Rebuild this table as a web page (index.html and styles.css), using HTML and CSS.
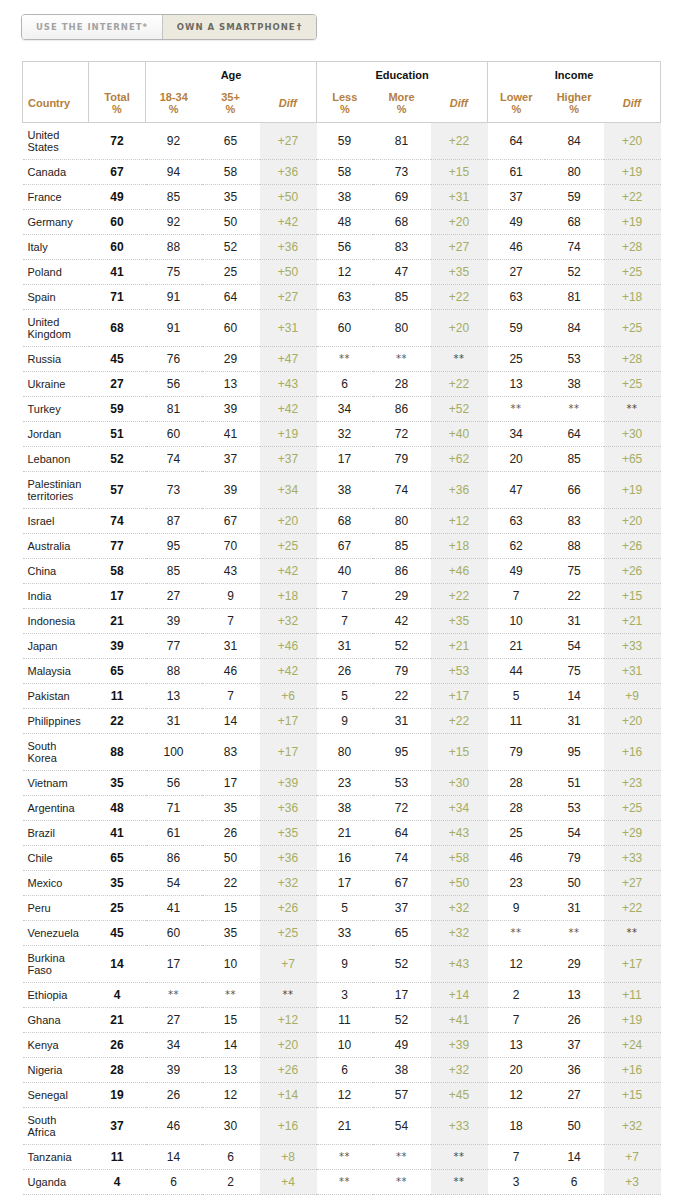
FILE: index.html
```html
<!DOCTYPE html>
<html>
<head>
<meta charset="utf-8">
<link rel="stylesheet" href="styles.css">
</head>
<body>
<div class="page">
  <div class="tabs">
    <div class="tab tab-off">USE THE INTERNET*</div>
    <div class="tab tab-on">OWN A SMARTPHONE<sup>†</sup></div>
  </div>
  <table class="data">
    <colgroup>
      <col class="c-country"><col class="c-total">
      <col class="c1"><col class="c2"><col class="c3">
      <col class="c1"><col class="c2"><col class="c3">
      <col class="c4"><col class="c5"><col class="c3">
    </colgroup>
    <thead>
      <tr class="h1">
        <th class="blank sep"></th>
        <th class="blank sep"></th>
        <th colspan="3" class="grp sep">Age</th>
        <th colspan="3" class="grp sep">Education</th>
        <th colspan="3" class="grp">Income</th>
      </tr>
      <tr class="h2">
        <th class="lbl country sep">Country</th>
        <th class="lbl sep">Total<br>%</th>
        <th class="lbl">18-34<br>%</th>
        <th class="lbl">35+<br>%</th>
        <th class="lbl diffh sep">Diff</th>
        <th class="lbl">Less<br>%</th>
        <th class="lbl">More<br>%</th>
        <th class="lbl diffh sep">Diff</th>
        <th class="lbl">Lower<br>%</th>
        <th class="lbl">Higher<br>%</th>
        <th class="lbl diffh">Diff</th>
      </tr>
    </thead>
    <tbody>
      <tr><td class="cn">United<br>States</td><td class="t">72</td><td>92</td><td>65</td><td class="d">+27</td><td>59</td><td>81</td><td class="d">+22</td><td>64</td><td>84</td><td class="d">+20</td></tr>
      <tr><td class="cn">Canada</td><td class="t">67</td><td>94</td><td>58</td><td class="d">+36</td><td>58</td><td>73</td><td class="d">+15</td><td>61</td><td>80</td><td class="d">+19</td></tr>
      <tr><td class="cn">France</td><td class="t">49</td><td>85</td><td>35</td><td class="d">+50</td><td>38</td><td>69</td><td class="d">+31</td><td>37</td><td>59</td><td class="d">+22</td></tr>
      <tr><td class="cn">Germany</td><td class="t">60</td><td>92</td><td>50</td><td class="d">+42</td><td>48</td><td>68</td><td class="d">+20</td><td>49</td><td>68</td><td class="d">+19</td></tr>
      <tr><td class="cn">Italy</td><td class="t">60</td><td>88</td><td>52</td><td class="d">+36</td><td>56</td><td>83</td><td class="d">+27</td><td>46</td><td>74</td><td class="d">+28</td></tr>
      <tr><td class="cn">Poland</td><td class="t">41</td><td>75</td><td>25</td><td class="d">+50</td><td>12</td><td>47</td><td class="d">+35</td><td>27</td><td>52</td><td class="d">+25</td></tr>
      <tr><td class="cn">Spain</td><td class="t">71</td><td>91</td><td>64</td><td class="d">+27</td><td>63</td><td>85</td><td class="d">+22</td><td>63</td><td>81</td><td class="d">+18</td></tr>
      <tr><td class="cn">United<br>Kingdom</td><td class="t">68</td><td>91</td><td>60</td><td class="d">+31</td><td>60</td><td>80</td><td class="d">+20</td><td>59</td><td>84</td><td class="d">+25</td></tr>
      <tr><td class="cn">Russia</td><td class="t">45</td><td>76</td><td>29</td><td class="d">+47</td><td class="na">**</td><td class="na">**</td><td class="d na">**</td><td>25</td><td>53</td><td class="d">+28</td></tr>
      <tr><td class="cn">Ukraine</td><td class="t">27</td><td>56</td><td>13</td><td class="d">+43</td><td>6</td><td>28</td><td class="d">+22</td><td>13</td><td>38</td><td class="d">+25</td></tr>
      <tr><td class="cn">Turkey</td><td class="t">59</td><td>81</td><td>39</td><td class="d">+42</td><td>34</td><td>86</td><td class="d">+52</td><td class="na">**</td><td class="na">**</td><td class="d na">**</td></tr>
      <tr><td class="cn">Jordan</td><td class="t">51</td><td>60</td><td>41</td><td class="d">+19</td><td>32</td><td>72</td><td class="d">+40</td><td>34</td><td>64</td><td class="d">+30</td></tr>
      <tr><td class="cn">Lebanon</td><td class="t">52</td><td>74</td><td>37</td><td class="d">+37</td><td>17</td><td>79</td><td class="d">+62</td><td>20</td><td>85</td><td class="d">+65</td></tr>
      <tr><td class="cn">Palestinian<br>territories</td><td class="t">57</td><td>73</td><td>39</td><td class="d">+34</td><td>38</td><td>74</td><td class="d">+36</td><td>47</td><td>66</td><td class="d">+19</td></tr>
      <tr><td class="cn">Israel</td><td class="t">74</td><td>87</td><td>67</td><td class="d">+20</td><td>68</td><td>80</td><td class="d">+12</td><td>63</td><td>83</td><td class="d">+20</td></tr>
      <tr><td class="cn">Australia</td><td class="t">77</td><td>95</td><td>70</td><td class="d">+25</td><td>67</td><td>85</td><td class="d">+18</td><td>62</td><td>88</td><td class="d">+26</td></tr>
      <tr><td class="cn">China</td><td class="t">58</td><td>85</td><td>43</td><td class="d">+42</td><td>40</td><td>86</td><td class="d">+46</td><td>49</td><td>75</td><td class="d">+26</td></tr>
      <tr><td class="cn">India</td><td class="t">17</td><td>27</td><td>9</td><td class="d">+18</td><td>7</td><td>29</td><td class="d">+22</td><td>7</td><td>22</td><td class="d">+15</td></tr>
      <tr><td class="cn">Indonesia</td><td class="t">21</td><td>39</td><td>7</td><td class="d">+32</td><td>7</td><td>42</td><td class="d">+35</td><td>10</td><td>31</td><td class="d">+21</td></tr>
      <tr><td class="cn">Japan</td><td class="t">39</td><td>77</td><td>31</td><td class="d">+46</td><td>31</td><td>52</td><td class="d">+21</td><td>21</td><td>54</td><td class="d">+33</td></tr>
      <tr><td class="cn">Malaysia</td><td class="t">65</td><td>88</td><td>46</td><td class="d">+42</td><td>26</td><td>79</td><td class="d">+53</td><td>44</td><td>75</td><td class="d">+31</td></tr>
      <tr><td class="cn">Pakistan</td><td class="t">11</td><td>13</td><td>7</td><td class="d">+6</td><td>5</td><td>22</td><td class="d">+17</td><td>5</td><td>14</td><td class="d">+9</td></tr>
      <tr><td class="cn">Philippines</td><td class="t">22</td><td>31</td><td>14</td><td class="d">+17</td><td>9</td><td>31</td><td class="d">+22</td><td>11</td><td>31</td><td class="d">+20</td></tr>
      <tr><td class="cn">South<br>Korea</td><td class="t">88</td><td>100</td><td>83</td><td class="d">+17</td><td>80</td><td>95</td><td class="d">+15</td><td>79</td><td>95</td><td class="d">+16</td></tr>
      <tr><td class="cn">Vietnam</td><td class="t">35</td><td>56</td><td>17</td><td class="d">+39</td><td>23</td><td>53</td><td class="d">+30</td><td>28</td><td>51</td><td class="d">+23</td></tr>
      <tr><td class="cn">Argentina</td><td class="t">48</td><td>71</td><td>35</td><td class="d">+36</td><td>38</td><td>72</td><td class="d">+34</td><td>28</td><td>53</td><td class="d">+25</td></tr>
      <tr><td class="cn">Brazil</td><td class="t">41</td><td>61</td><td>26</td><td class="d">+35</td><td>21</td><td>64</td><td class="d">+43</td><td>25</td><td>54</td><td class="d">+29</td></tr>
      <tr><td class="cn">Chile</td><td class="t">65</td><td>86</td><td>50</td><td class="d">+36</td><td>16</td><td>74</td><td class="d">+58</td><td>46</td><td>79</td><td class="d">+33</td></tr>
      <tr><td class="cn">Mexico</td><td class="t">35</td><td>54</td><td>22</td><td class="d">+32</td><td>17</td><td>67</td><td class="d">+50</td><td>23</td><td>50</td><td class="d">+27</td></tr>
      <tr><td class="cn">Peru</td><td class="t">25</td><td>41</td><td>15</td><td class="d">+26</td><td>5</td><td>37</td><td class="d">+32</td><td>9</td><td>31</td><td class="d">+22</td></tr>
      <tr><td class="cn">Venezuela</td><td class="t">45</td><td>60</td><td>35</td><td class="d">+25</td><td>33</td><td>65</td><td class="d">+32</td><td class="na">**</td><td class="na">**</td><td class="d na">**</td></tr>
      <tr><td class="cn">Burkina<br>Faso</td><td class="t">14</td><td>17</td><td>10</td><td class="d">+7</td><td>9</td><td>52</td><td class="d">+43</td><td>12</td><td>29</td><td class="d">+17</td></tr>
      <tr><td class="cn">Ethiopia</td><td class="t">4</td><td class="na">**</td><td class="na">**</td><td class="d na">**</td><td>3</td><td>17</td><td class="d">+14</td><td>2</td><td>13</td><td class="d">+11</td></tr>
      <tr><td class="cn">Ghana</td><td class="t">21</td><td>27</td><td>15</td><td class="d">+12</td><td>11</td><td>52</td><td class="d">+41</td><td>7</td><td>26</td><td class="d">+19</td></tr>
      <tr><td class="cn">Kenya</td><td class="t">26</td><td>34</td><td>14</td><td class="d">+20</td><td>10</td><td>49</td><td class="d">+39</td><td>13</td><td>37</td><td class="d">+24</td></tr>
      <tr><td class="cn">Nigeria</td><td class="t">28</td><td>39</td><td>13</td><td class="d">+26</td><td>6</td><td>38</td><td class="d">+32</td><td>20</td><td>36</td><td class="d">+16</td></tr>
      <tr><td class="cn">Senegal</td><td class="t">19</td><td>26</td><td>12</td><td class="d">+14</td><td>12</td><td>57</td><td class="d">+45</td><td>12</td><td>27</td><td class="d">+15</td></tr>
      <tr><td class="cn">South<br>Africa</td><td class="t">37</td><td>46</td><td>30</td><td class="d">+16</td><td>21</td><td>54</td><td class="d">+33</td><td>18</td><td>50</td><td class="d">+32</td></tr>
      <tr><td class="cn">Tanzania</td><td class="t">11</td><td>14</td><td>6</td><td class="d">+8</td><td class="na">**</td><td class="na">**</td><td class="d na">**</td><td>7</td><td>14</td><td class="d">+7</td></tr>
      <tr><td class="cn">Uganda</td><td class="t">4</td><td>6</td><td>2</td><td class="d">+4</td><td class="na">**</td><td class="na">**</td><td class="d na">**</td><td>3</td><td>6</td><td class="d">+3</td></tr>
    </tbody>
  </table>
</div>
</body>
</html>
```

FILE: styles.css
```css
* { box-sizing: border-box; }
html, body { margin: 0; padding: 0; background: #fff; }
body { font-family: "Liberation Sans", Arial, sans-serif; color: #222; }

.page { padding: 14px 0 0 21px; }

.tabs {
  display: flex;
  width: 296px;
  height: 26px;
  border: 1px solid #b4b4b4;
  border-radius: 4px;
  overflow: hidden;
  box-shadow: 0 1px 1px rgba(0,0,0,0.08);
}
.tab {
  display: flex;
  align-items: center;
  justify-content: center;
  font-family: "DejaVu Sans", Verdana, sans-serif;
  font-weight: bold;
  font-size: 8.5px;
  letter-spacing: 1px;
  white-space: nowrap;
}
.tab sup { font-size: 9px; vertical-align: 4px; line-height: 0; margin-left: 1px; }
.tab-off {
  width: 141px;
  color: #a3a3a3;
  background: linear-gradient(#ffffff, #f1f1f1);
  border-right: 1px solid #c4c4c4;
}
.tab-on {
  flex: 1;
  color: #6a6a62;
  background: #eceade;
}

.data {
  margin: 21px 0 0 1px;
  width: 638px;
  table-layout: fixed;
  border-collapse: collapse;
}
.c-country { width: 66px; }
.c-total { width: 57px; }
.c1 { width: 56px; }
.c2 { width: 58px; }
.c3 { width: 57px; }
.c4 { width: 57px; }
.c5 { width: 59px; }

thead th {
  padding: 0;
  border-top: 1px solid #cfcfcf;
  border-bottom: 1px solid #cfcfcf;
}
thead tr.h1 th { border-bottom: none; height: 25px; }
thead tr.h2 th { border-top: none; height: 36px; }
thead th:first-child { border-left: 1px solid #cfcfcf; }
thead th:last-child { border-right: 1px solid #cfcfcf; }
thead th.sep { border-right: 1px solid #cfcfcf; }

.grp {
  font-size: 11px;
  font-weight: bold;
  color: #111;
  text-align: center;
  vertical-align: middle;
  padding-top: 1px !important;
}
.lbl {
  font-size: 11px;
  line-height: 12px;
  font-weight: bold;
  color: #b5803c;
  text-align: center;
  vertical-align: middle;
  padding-bottom: 2px !important;
}
.lbl.country { text-align: left; padding-left: 5px !important; }
.lbl.diffh { font-style: italic; }

tbody td {
  font-size: 12px;
  line-height: 12px;
  padding: 6px 0;
  text-align: center;
  vertical-align: middle;
  border-bottom: 1px dotted #c8c8c8;
  color: #222;
}
tbody td.cn {
  font-size: 11px;
  text-align: left;
  padding-left: 5px;
  color: #222;
  white-space: nowrap;
}
tbody td.t { font-weight: bold; color: #111; }
tbody td.d { background: #f0f0f0; color: #a5ad62; }
tbody td.na { font-family: "DejaVu Sans", sans-serif; color: #555; font-size: 10px; letter-spacing: 0.5px; }
tbody td.d.na { color: #444; }
```
